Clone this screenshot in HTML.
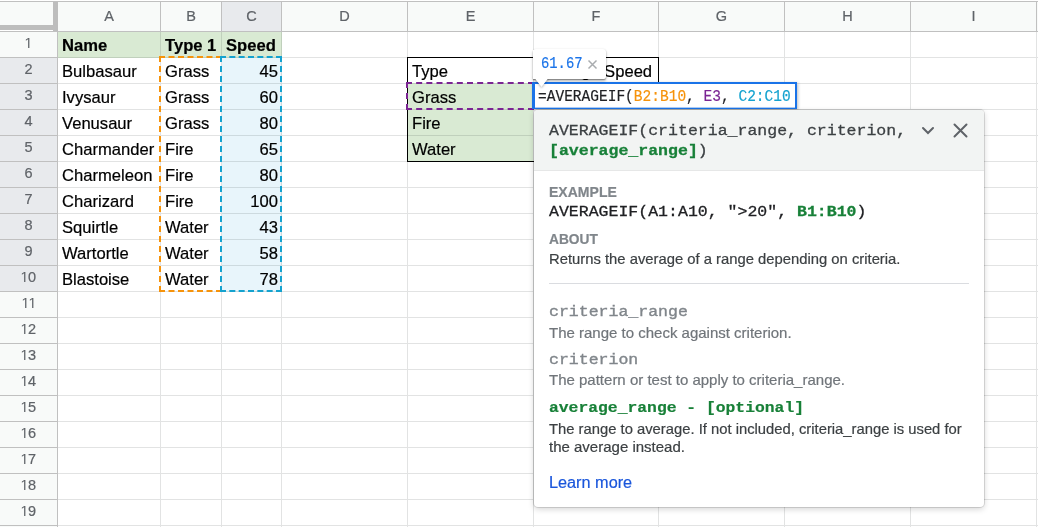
<!DOCTYPE html>
<html><head><meta charset="utf-8">
<style>
html,body{margin:0;padding:0}
body{width:1038px;height:527px;overflow:hidden;position:relative;background:#fff;font-family:"Liberation Sans",sans-serif}
#r{position:absolute;left:0;top:0;width:1038px;height:527px;overflow:hidden;will-change:transform}
#r>div{position:absolute;-webkit-text-stroke-width:0.2px}
.ch{height:29px;line-height:29px;text-align:center;font-size:14.5px;color:#5f6368}
.rh{left:0;width:57px;height:25px;line-height:22.5px;text-align:center;font-size:14.5px;color:#5f6368}
.one{width:0.483em;height:0.688em;vertical-align:baseline;display:inline-block}
.t{height:25px;line-height:27px;font-size:16.6px;color:#000;padding:0 4px;box-sizing:border-box;white-space:nowrap;overflow:visible}
.t.b{font-weight:bold}
.t.r{text-align:right;padding-right:3px}
</style></head><body><div id="r">
<div style="left:0px;top:2px;width:1038px;height:29px;background:#f8faf9"></div>
<div style="left:222px;top:2px;width:59px;height:29px;background:#e8eaed"></div>
<div style="left:0px;top:32px;width:57px;height:495px;background:#f8faf9"></div>
<div style="left:0px;top:58px;width:57px;height:233px;background:#e8eaed"></div>
<div style="left:58px;top:32px;width:224px;height:26px;background:#d9ead3"></div>
<div style="left:222px;top:58px;width:60px;height:234px;background:#e8f5fb"></div>
<div style="left:408px;top:83px;width:125px;height:78px;background:#d9ead3"></div>
<div style="left:0;top:0;width:1038px;height:527px;mix-blend-mode:multiply"><div style="position:absolute;left:58px;top:57px;width:980px;height:1px;background:#e2e3e3"></div><div style="position:absolute;left:58px;top:83px;width:980px;height:1px;background:#e2e3e3"></div><div style="position:absolute;left:58px;top:109px;width:980px;height:1px;background:#e2e3e3"></div><div style="position:absolute;left:58px;top:135px;width:980px;height:1px;background:#e2e3e3"></div><div style="position:absolute;left:58px;top:161px;width:980px;height:1px;background:#e2e3e3"></div><div style="position:absolute;left:58px;top:187px;width:980px;height:1px;background:#e2e3e3"></div><div style="position:absolute;left:58px;top:213px;width:980px;height:1px;background:#e2e3e3"></div><div style="position:absolute;left:58px;top:239px;width:980px;height:1px;background:#e2e3e3"></div><div style="position:absolute;left:58px;top:265px;width:980px;height:1px;background:#e2e3e3"></div><div style="position:absolute;left:58px;top:291px;width:980px;height:1px;background:#e2e3e3"></div><div style="position:absolute;left:58px;top:317px;width:980px;height:1px;background:#e2e3e3"></div><div style="position:absolute;left:58px;top:343px;width:980px;height:1px;background:#e2e3e3"></div><div style="position:absolute;left:58px;top:369px;width:980px;height:1px;background:#e2e3e3"></div><div style="position:absolute;left:58px;top:395px;width:980px;height:1px;background:#e2e3e3"></div><div style="position:absolute;left:58px;top:421px;width:980px;height:1px;background:#e2e3e3"></div><div style="position:absolute;left:58px;top:447px;width:980px;height:1px;background:#e2e3e3"></div><div style="position:absolute;left:58px;top:473px;width:980px;height:1px;background:#e2e3e3"></div><div style="position:absolute;left:58px;top:499px;width:980px;height:1px;background:#e2e3e3"></div><div style="position:absolute;left:58px;top:525px;width:980px;height:1px;background:#e2e3e3"></div><div style="position:absolute;left:160px;top:32px;width:1px;height:495px;background:#e2e3e3"></div><div style="position:absolute;left:221px;top:32px;width:1px;height:495px;background:#e2e3e3"></div><div style="position:absolute;left:281px;top:32px;width:1px;height:495px;background:#e2e3e3"></div><div style="position:absolute;left:407px;top:32px;width:1px;height:495px;background:#e2e3e3"></div><div style="position:absolute;left:533px;top:32px;width:1px;height:495px;background:#e2e3e3"></div><div style="position:absolute;left:658px;top:32px;width:1px;height:495px;background:#e2e3e3"></div><div style="position:absolute;left:784px;top:32px;width:1px;height:495px;background:#e2e3e3"></div><div style="position:absolute;left:910px;top:32px;width:1px;height:495px;background:#e2e3e3"></div><div style="position:absolute;left:1036px;top:32px;width:1px;height:495px;background:#e2e3e3"></div></div>
<div style="left:0px;top:1px;width:1038px;height:1px;background:#c0c0c0"></div>
<div style="left:0px;top:31px;width:1038px;height:1px;background:#c0c0c0"></div>
<div style="left:160px;top:2px;width:1px;height:29px;background:#c0c0c0"></div>
<div style="left:221px;top:2px;width:1px;height:29px;background:#c0c0c0"></div>
<div style="left:281px;top:2px;width:1px;height:29px;background:#c0c0c0"></div>
<div style="left:407px;top:2px;width:1px;height:29px;background:#c0c0c0"></div>
<div style="left:533px;top:2px;width:1px;height:29px;background:#c0c0c0"></div>
<div style="left:658px;top:2px;width:1px;height:29px;background:#c0c0c0"></div>
<div style="left:784px;top:2px;width:1px;height:29px;background:#c0c0c0"></div>
<div style="left:910px;top:2px;width:1px;height:29px;background:#c0c0c0"></div>
<div style="left:1036px;top:2px;width:1px;height:29px;background:#c0c0c0"></div>
<div style="left:57px;top:32px;width:1px;height:495px;background:#c0c0c0"></div>
<div style="left:0px;top:57px;width:57px;height:1px;background:#c0c0c0"></div>
<div style="left:0px;top:83px;width:57px;height:1px;background:#c0c0c0"></div>
<div style="left:0px;top:109px;width:57px;height:1px;background:#c0c0c0"></div>
<div style="left:0px;top:135px;width:57px;height:1px;background:#c0c0c0"></div>
<div style="left:0px;top:161px;width:57px;height:1px;background:#c0c0c0"></div>
<div style="left:0px;top:187px;width:57px;height:1px;background:#c0c0c0"></div>
<div style="left:0px;top:213px;width:57px;height:1px;background:#c0c0c0"></div>
<div style="left:0px;top:239px;width:57px;height:1px;background:#c0c0c0"></div>
<div style="left:0px;top:265px;width:57px;height:1px;background:#c0c0c0"></div>
<div style="left:0px;top:291px;width:57px;height:1px;background:#c0c0c0"></div>
<div style="left:0px;top:317px;width:57px;height:1px;background:#c0c0c0"></div>
<div style="left:0px;top:343px;width:57px;height:1px;background:#c0c0c0"></div>
<div style="left:0px;top:369px;width:57px;height:1px;background:#c0c0c0"></div>
<div style="left:0px;top:395px;width:57px;height:1px;background:#c0c0c0"></div>
<div style="left:0px;top:421px;width:57px;height:1px;background:#c0c0c0"></div>
<div style="left:0px;top:447px;width:57px;height:1px;background:#c0c0c0"></div>
<div style="left:0px;top:473px;width:57px;height:1px;background:#c0c0c0"></div>
<div style="left:0px;top:499px;width:57px;height:1px;background:#c0c0c0"></div>
<div style="left:0px;top:525px;width:57px;height:1px;background:#c0c0c0"></div>
<div style="left:53px;top:2px;width:5px;height:29px;background:#bdbdbd"></div>
<div style="left:0px;top:25px;width:53px;height:5px;background:#bdbdbd"></div>
<div style="left:0px;top:30px;width:53px;height:1px;background:#ffffff"></div>
<div class="ch" style="left:58px;top:2px;width:102px">A</div>
<div class="ch" style="left:161px;top:2px;width:60px">B</div>
<div class="ch" style="left:222px;top:2px;width:59px">C</div>
<div class="ch" style="left:282px;top:2px;width:125px">D</div>
<div class="ch" style="left:408px;top:2px;width:125px">E</div>
<div class="ch" style="left:534px;top:2px;width:124px">F</div>
<div class="ch" style="left:659px;top:2px;width:125px">G</div>
<div class="ch" style="left:785px;top:2px;width:125px">H</div>
<div class="ch" style="left:911px;top:2px;width:125px">I</div>
<div class="rh" style="top:32px"><svg class="one" viewBox="0 0 990 1409" preserveAspectRatio="none"><path d="M440 1409L440 172L122 399L122 229L455 0L621 0L621 1409Z" fill="#5f6368"/></svg></div>
<div class="rh" style="top:58px">2</div>
<div class="rh" style="top:84px">3</div>
<div class="rh" style="top:110px">4</div>
<div class="rh" style="top:136px">5</div>
<div class="rh" style="top:162px">6</div>
<div class="rh" style="top:188px">7</div>
<div class="rh" style="top:214px">8</div>
<div class="rh" style="top:240px">9</div>
<div class="rh" style="top:266px"><svg class="one" viewBox="0 0 990 1409" preserveAspectRatio="none"><path d="M440 1409L440 172L122 399L122 229L455 0L621 0L621 1409Z" fill="#5f6368"/></svg>0</div>
<div class="rh" style="top:292px"><svg class="one" viewBox="0 0 990 1409" preserveAspectRatio="none"><path d="M440 1409L440 172L122 399L122 229L455 0L621 0L621 1409Z" fill="#5f6368"/></svg><svg class="one" viewBox="0 0 990 1409" preserveAspectRatio="none"><path d="M440 1409L440 172L122 399L122 229L455 0L621 0L621 1409Z" fill="#5f6368"/></svg></div>
<div class="rh" style="top:318px"><svg class="one" viewBox="0 0 990 1409" preserveAspectRatio="none"><path d="M440 1409L440 172L122 399L122 229L455 0L621 0L621 1409Z" fill="#5f6368"/></svg>2</div>
<div class="rh" style="top:344px"><svg class="one" viewBox="0 0 990 1409" preserveAspectRatio="none"><path d="M440 1409L440 172L122 399L122 229L455 0L621 0L621 1409Z" fill="#5f6368"/></svg>3</div>
<div class="rh" style="top:370px"><svg class="one" viewBox="0 0 990 1409" preserveAspectRatio="none"><path d="M440 1409L440 172L122 399L122 229L455 0L621 0L621 1409Z" fill="#5f6368"/></svg>4</div>
<div class="rh" style="top:396px"><svg class="one" viewBox="0 0 990 1409" preserveAspectRatio="none"><path d="M440 1409L440 172L122 399L122 229L455 0L621 0L621 1409Z" fill="#5f6368"/></svg>5</div>
<div class="rh" style="top:422px"><svg class="one" viewBox="0 0 990 1409" preserveAspectRatio="none"><path d="M440 1409L440 172L122 399L122 229L455 0L621 0L621 1409Z" fill="#5f6368"/></svg>6</div>
<div class="rh" style="top:448px"><svg class="one" viewBox="0 0 990 1409" preserveAspectRatio="none"><path d="M440 1409L440 172L122 399L122 229L455 0L621 0L621 1409Z" fill="#5f6368"/></svg>7</div>
<div class="rh" style="top:474px"><svg class="one" viewBox="0 0 990 1409" preserveAspectRatio="none"><path d="M440 1409L440 172L122 399L122 229L455 0L621 0L621 1409Z" fill="#5f6368"/></svg>8</div>
<div class="rh" style="top:500px"><svg class="one" viewBox="0 0 990 1409" preserveAspectRatio="none"><path d="M440 1409L440 172L122 399L122 229L455 0L621 0L621 1409Z" fill="#5f6368"/></svg>9</div>
<div class="t b" style="left:58px;top:32px;width:102px">Name</div>
<div class="t b" style="left:161px;top:32px;width:60px">Type 1</div>
<div class="t b" style="left:222px;top:32px;width:59px">Speed</div>
<div class="t" style="left:58px;top:58px;width:102px">Bulbasaur</div>
<div class="t" style="left:161px;top:58px;width:60px">Grass</div>
<div class="t r" style="left:222px;top:58px;width:59px">45</div>
<div class="t" style="left:58px;top:84px;width:102px">Ivysaur</div>
<div class="t" style="left:161px;top:84px;width:60px">Grass</div>
<div class="t r" style="left:222px;top:84px;width:59px">60</div>
<div class="t" style="left:58px;top:110px;width:102px">Venusaur</div>
<div class="t" style="left:161px;top:110px;width:60px">Grass</div>
<div class="t r" style="left:222px;top:110px;width:59px">80</div>
<div class="t" style="left:58px;top:136px;width:102px">Charmander</div>
<div class="t" style="left:161px;top:136px;width:60px">Fire</div>
<div class="t r" style="left:222px;top:136px;width:59px">65</div>
<div class="t" style="left:58px;top:162px;width:102px">Charmeleon</div>
<div class="t" style="left:161px;top:162px;width:60px">Fire</div>
<div class="t r" style="left:222px;top:162px;width:59px">80</div>
<div class="t" style="left:58px;top:188px;width:102px">Charizard</div>
<div class="t" style="left:161px;top:188px;width:60px">Fire</div>
<div class="t r" style="left:222px;top:188px;width:59px">100</div>
<div class="t" style="left:58px;top:214px;width:102px">Squirtle</div>
<div class="t" style="left:161px;top:214px;width:60px">Water</div>
<div class="t r" style="left:222px;top:214px;width:59px">43</div>
<div class="t" style="left:58px;top:240px;width:102px">Wartortle</div>
<div class="t" style="left:161px;top:240px;width:60px">Water</div>
<div class="t r" style="left:222px;top:240px;width:59px">58</div>
<div class="t" style="left:58px;top:266px;width:102px">Blastoise</div>
<div class="t" style="left:161px;top:266px;width:60px">Water</div>
<div class="t r" style="left:222px;top:266px;width:59px">78</div>
<div class="t" style="left:408px;top:58px;width:125px">Type</div>
<div class="t" style="left:408px;top:84px;width:125px">Grass</div>
<div class="t" style="left:408px;top:110px;width:125px">Fire</div>
<div class="t" style="left:408px;top:136px;width:125px">Water</div>
<div class="t" style="left:534px;top:58px;width:124px">Average Speed</div>
<div style="left:407px;top:57px;width:252px;height:1px;background:#000"></div>
<div style="left:407px;top:57px;width:1px;height:105px;background:#000"></div>
<div style="left:407px;top:161px;width:127px;height:1px;background:#000"></div>
<div style="left:658px;top:57px;width:1px;height:27px;background:#000"></div>
<svg style="position:absolute;left:0;top:0" width="1038" height="527"><path d="M160 56L160 292" stroke="#f6930b" stroke-width="2" fill="none" stroke-dasharray="6 4.000"/><path d="M221 56L221 292" stroke="#f6930b" stroke-width="2" fill="none" stroke-dasharray="6 4.000"/><path d="M159 57L222 57" stroke="#f6930b" stroke-width="2" fill="none" stroke-dasharray="6 3.500"/><path d="M159 291L222 291" stroke="#f6930b" stroke-width="2" fill="none" stroke-dasharray="6 3.500"/><path d="M221 56L221 292" stroke="#14a2cf" stroke-width="2" fill="none" stroke-dasharray="6 4.000"/><path d="M281 56L281 292" stroke="#14a2cf" stroke-width="2" fill="none" stroke-dasharray="6 4.000"/><path d="M220 57L282 57" stroke="#14a2cf" stroke-width="2" fill="none" stroke-dasharray="6 3.333"/><path d="M220 291L282 291" stroke="#14a2cf" stroke-width="2" fill="none" stroke-dasharray="6 3.333"/><path d="M407 82L407 110" stroke="#7b2593" stroke-width="2" fill="none" stroke-dasharray="6 5.000"/><path d="M533 82L533 110" stroke="#7b2593" stroke-width="2" fill="none" stroke-dasharray="6 5.000"/><path d="M406 83L534 83" stroke="#7b2593" stroke-width="2" fill="none" stroke-dasharray="6 4.167"/><path d="M406 109L534 109" stroke="#7b2593" stroke-width="2" fill="none" stroke-dasharray="6 4.167"/></svg>
<div style="left:532px;top:82px;width:265px;height:27px;box-sizing:border-box;border:2px solid #1a73e8;border-left-width:3px;border-bottom-width:1px;background:#fff;box-shadow:inset 0 -1px 0 rgba(26,115,232,.35),1px 1px 3px rgba(0,0,0,.25)"></div>
<div style="left:537.9px;top:89.00px;line-height:17.90px;font-size:15.8px;font-family:'Liberation Mono',monospace;white-space:nowrap;color:#202124;transform:scaleX(0.919);transform-origin:0 0">=AVERAGEIF(<span style="color:#f6930b">B2:B10</span>, <span style="color:#7b2593">E3</span>, <span style="color:#14a2cf">C2:C10</span></div>
<div style="left:533px;top:49px;width:73px;height:30px;background:#fff;border-radius:3px 3px 2px 0;box-shadow:0 1px 1px rgba(0,0,0,.3),0 2px 3px rgba(0,0,0,.28),0 0 2px rgba(0,0,0,.1)"></div>
<svg style="position:absolute;left:530px;top:76px" width="24" height="14"><path d="M3 0L11.5 11L20 0Z" fill="#fff" style="filter:drop-shadow(0.5px 1px 1px rgba(0,0,0,.3))"/></svg>
<div style="left:533px;top:50px;width:20px;height:29px;background:#fff"></div>
<div style="left:540.6px;top:55.00px;line-height:18.12px;font-size:16px;font-family:'Liberation Mono',monospace;white-space:nowrap;color:#1a73e8;transform:scaleX(0.865);transform-origin:0 0">61.67</div>
<svg style="position:absolute;left:587px;top:58.5px" width="11" height="11"><path d="M1.5 1.5L9.5 9.5M9.5 1.5L1.5 9.5" stroke="#a9acaf" stroke-width="1.5"/></svg>
<div style="left:534px;top:110px;width:450px;height:397px;background:#fff;border-radius:4px;box-shadow:0 0 0 1px rgba(0,0,0,.12),0 2px 6px rgba(0,0,0,.18);overflow:hidden"><div style="position:absolute;left:0;top:0;width:450px;height:60px;background:#f2f4f3;border-bottom:1px solid #e6e7e7"></div></div>
<div style="left:549px;top:122.00px;line-height:18.75px;font-size:16.55px;font-family:'Liberation Mono',monospace;white-space:nowrap;transform:scale(1.0,0.91);transform-origin:0 13.78px;color:#3c4043;-webkit-text-stroke-width:0.3px">AVERAGEIF(criteria_range, criterion,</div>
<div style="left:549px;top:142.00px;line-height:18.75px;font-size:16.55px;font-family:'Liberation Mono',monospace;white-space:nowrap;transform:scale(1.0,0.91);transform-origin:0 13.78px;color:#3c4043;-webkit-text-stroke-width:0.3px"><b style="color:#188038">[average_range]</b>)</div>
<svg style="position:absolute;left:918px;top:122px" width="20" height="16"><path d="M5 6L10 11L15 6" stroke="#5f6368" stroke-width="2" fill="none" stroke-linecap="round"/></svg>
<svg style="position:absolute;left:950px;top:120px" width="20" height="20"><path d="M4.5 4.5L16.5 16.5M16.5 4.5L4.5 16.5" stroke="#5f6368" stroke-width="2" fill="none" stroke-linecap="round"/></svg>
<div style="left:548.6px;top:184.00px;line-height:16.09px;font-size:14.4px;font-family:'Liberation Sans',monospace;white-space:nowrap;transform:scale(0.975,1.0);transform-origin:0 13.04px;color:#80868b;font-weight:bold">EXAMPLE</div>
<div style="left:549px;top:203.00px;line-height:18.75px;font-size:16.55px;font-family:'Liberation Mono',monospace;white-space:nowrap;transform:scale(1.0,0.91);transform-origin:0 13.78px;color:#202124;-webkit-text-stroke-width:0.3px">AVERAGEIF(A1:A10, "&gt;20", <b style="color:#188038">B1:B10</b>)</div>
<div style="left:548.6px;top:231.00px;line-height:16.09px;font-size:14.4px;font-family:'Liberation Sans',monospace;white-space:nowrap;transform:scale(0.955,1.0);transform-origin:0 13.04px;color:#80868b;font-weight:bold">ABOUT</div>
<div style="left:549px;top:251.00px;line-height:16.76px;font-size:15px;font-family:'Liberation Sans',monospace;white-space:nowrap;color:#3c4043;transform:scaleX(0.987);transform-origin:0 0">Returns the average of a range depending on criteria.</div>
<div style="left:549px;top:283px;width:420px;height:1px;background:#dadce0"></div>
<div style="left:549px;top:303.00px;line-height:18.75px;font-size:16.55px;font-family:'Liberation Mono',monospace;white-space:nowrap;transform:scale(1.0,0.91);transform-origin:0 13.78px;color:#80868b;-webkit-text-stroke-width:0.4px">criteria_range</div>
<div style="left:549px;top:325.00px;line-height:16.76px;font-size:15px;font-family:'Liberation Sans',monospace;white-space:nowrap;color:#70757a">The range to check against criterion.</div>
<div style="left:549px;top:351.00px;line-height:18.75px;font-size:16.55px;font-family:'Liberation Mono',monospace;white-space:nowrap;transform:scale(1.0,0.91);transform-origin:0 13.78px;color:#80868b;-webkit-text-stroke-width:0.4px">criterion</div>
<div style="left:549px;top:372.00px;line-height:16.76px;font-size:15px;font-family:'Liberation Sans',monospace;white-space:nowrap;color:#70757a">The pattern or test to apply to criteria_range.</div>
<div style="left:549px;top:399.00px;line-height:18.52px;font-size:16.35px;font-family:'Liberation Mono',monospace;white-space:nowrap;transform:scale(1.0,0.91);transform-origin:0 13.61px;color:#188038;font-weight:bold">average_range - [optional]</div>
<div style="left:549px;top:421.00px;line-height:16.76px;font-size:15px;font-family:'Liberation Sans',monospace;white-space:nowrap;color:#3c4043;transform:scaleX(0.986);transform-origin:0 0">The range to average. If not included, criteria_range is used for</div>
<div style="left:549px;top:439.00px;line-height:16.76px;font-size:15px;font-family:'Liberation Sans',monospace;white-space:nowrap;color:#3c4043">the average instead.</div>
<div style="left:549px;top:474.00px;line-height:17.88px;font-size:16px;font-family:'Liberation Sans',monospace;white-space:nowrap;color:#1a56db;transform:scaleX(1.016);transform-origin:0 0">Learn more</div>
</div></body></html>
